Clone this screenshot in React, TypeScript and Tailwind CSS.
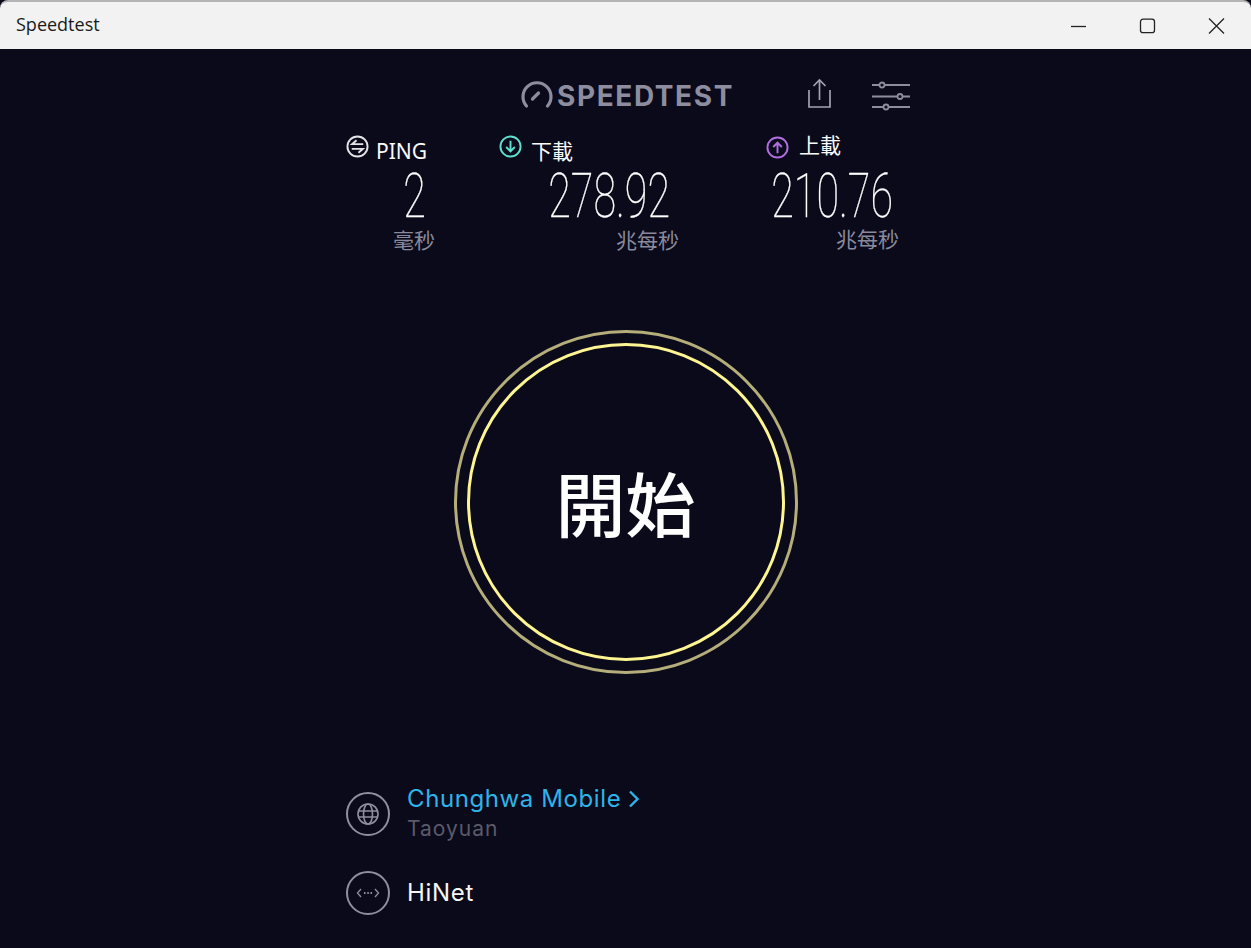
import React from "react";

const cjk = "font-['Noto_Sans','Noto_Sans_CJK_TC',sans-serif]";

function Metric({ icon, label, value, unit, cls, labelCls, valueCls, unitCls }: { icon: React.ReactNode; label: string; value: string; unit: string; cls: string; labelCls: string; valueCls: string; unitCls: string }) {
  return (
    <div className={`flex flex-col shrink-0 ${cls}`}>
      <div className="flex items-start h-[32px]">
        {icon}
        <span className={`text-[#fafafa] text-[21px] leading-[28px] font-normal ${cjk} ${labelCls}`}>{label}</span>
      </div>
      <div className={`h-[58px] flex justify-end ${valueCls}`}>
        <span className="text-white font-['Roboto',sans-serif] font-thin [-webkit-text-stroke:0.35px_white] text-[62px] leading-[58px] origin-right scale-x-[0.665] whitespace-nowrap inline-block">{value}</span>
      </div>
      <div className={`text-right text-[#8a8a9e] text-[21px] leading-[24px] ${cjk} ${unitCls}`}>{unit}</div>
    </div>
  );
}

export default function App() {
  return (
    <div className="w-[1251px] h-[948px] flex flex-col overflow-hidden bg-[#0a0a1a]">
      <header className="h-[49px] shrink-0 bg-[#f2f2f2] border-t-2 border-[#b4b4b4] rounded-t-[8px] flex items-center justify-between">
        <span className="pl-[16px] text-[18px] leading-[24px] -mt-[3px] text-[#1a1a1a] font-['Open_Sans',sans-serif]">Speedtest</span>
        <div className="flex items-center">
          <svg className="w-[69px] h-[16px]" viewBox="0 0 69 16" fill="none" stroke="#222" strokeWidth="1.3"><path d="M27 8.5h15" /></svg>
          <svg className="w-[69px] h-[16px]" viewBox="0 0 69 16" fill="none" stroke="#222" strokeWidth="1.3"><rect x="27.5" y="1.2" width="14" height="13.5" rx="2.5" /></svg>
          <svg className="w-[69px] h-[16px]" viewBox="0 0 69 16" fill="none" stroke="#222" strokeWidth="1.3"><path d="M27 .5l15 15M42 .5l-15 15" /></svg>
        </div>
      </header>

      <main className="flex-1 flex flex-col pl-[346px]">
        <div className="h-[80px] shrink-0 flex items-start pt-[29px] pl-[175px]">
          <svg className="w-[32px] h-[28px] shrink-0 mt-[3px]" viewBox="0 0 32 28" fill="none" stroke="#8d8d9f" strokeWidth="3.200" strokeLinecap="round">
            <path d="M5.5 25A14 14 0 1 1 26.5 25" />
            <path d="M11.500 18l6-6" />
          </svg>
          <span className="ml-[4px] mt-[1px] text-[#8d8d9f] font-['Inter',sans-serif] font-bold text-[28px] leading-[34px] tracking-[1.6px] whitespace-nowrap">SPEEDTEST</span>
          <svg className="w-[26px] h-[32px] shrink-0 ml-[73px]" viewBox="0 0 26 32" fill="none" stroke="#a2a2b2" strokeWidth="1.7"><path d="M2 12v17h21V12M12.500 22V2M6.500 8l6-6 6 6" /></svg>
          <svg className="w-[38px] h-[30px] shrink-0 ml-[39px] mt-[3px]" viewBox="0 0 38 30" fill="none" stroke="#8d8d9f" strokeWidth="1.800"><path d="M0 4h7M13 4h25M0 15.500h25M31 15.500h7M0 26h11M17 26h21" /><circle cx="10" cy="4" r="2.500" /><circle cx="28" cy="15.500" r="2.500" /><circle cx="14" cy="26" r="2.500" /></svg>
        </div>

        <div className="h-[130px] shrink-0 flex items-start">
          <Metric cls="w-[89px]" labelCls="mt-[8px]" valueCls="pr-[9px] mt-[6px]" unitCls="mt-[3px]"
            icon={<svg className="w-[23px] h-[23px] shrink-0 mr-[7px] mt-[6px]" viewBox="0 0 24 24" fill="none" stroke="#e4e4e8" strokeWidth="2"><circle cx="12" cy="12" r="10.500" /><path d="M18 9.500H6.500l4.500-4M6 14.500h11.500l-4.500 4" /></svg>}
            label="PING" value="2" unit="毫秒" />
          <Metric cls="w-[180px] ml-[64px]" labelCls="mt-[8px]" valueCls="pr-[9px] mt-[6px]" unitCls="mt-[3px]"
            icon={<svg className="w-[23px] h-[23px] shrink-0 mr-[9px] mt-[6px]" viewBox="0 0 24 24" fill="none" stroke="#5fe0cf" strokeWidth="2"><circle cx="12" cy="12" r="10.500" /><path d="M12 6v11M7.500 12.500 12 17l4.500-4.500" /></svg>}
            label="下載" value="278.92" unit="兆每秒" />
          <Metric cls="w-[133px] ml-[87px]" labelCls="mt-[2px]" valueCls="pr-[6px] mt-[6px]" unitCls="mt-[2px]"
            icon={<svg className="w-[23px] h-[23px] shrink-0 mr-[10px] mt-[7px]" viewBox="0 0 24 24" fill="none" stroke="#b06fe0" strokeWidth="2"><circle cx="12" cy="12" r="10.500" /><path d="M12 18V7M7.500 11.500 12 7l4.500 4.500" /></svg>}
            label="上載" value="210.76" unit="兆每秒" />
        </div>

        <div className="h-[344px] shrink-0 mt-[71px] -ml-[346px] flex justify-center">
          <div className="w-[344px] h-[344px] rounded-full border-[3px] border-[#b5ae7a] flex items-center justify-center">
            <div className="w-[318px] h-[318px] rounded-full border-[3px] border-[#fdf492] flex items-center justify-center">
              <span className="text-white text-[70px] leading-none font-medium font-['Noto_Sans_CJK_TC',sans-serif]">開始</span>
            </div>
          </div>
        </div>

        <div className="mt-[118px] flex items-center h-[44px]">
          <div className="w-[44px] h-[44px] rounded-full border-[2.5px] border-[#8f8f9f] flex items-center justify-center shrink-0">
            <svg className="w-[22px] h-[22px]" viewBox="0 0 22 22" fill="none" stroke="#8f8f9f" strokeWidth="1.6"><circle cx="11" cy="11" r="10" /><ellipse cx="11" cy="11" rx="4.500" ry="10" /><path d="M1 8h20M1 14h20" /></svg>
          </div>
          <div className="ml-[17px] flex flex-col -mt-[3px]">
            <div className="flex items-center h-[30px]">
              <span className="text-[#2fb4ea] font-['Inter',sans-serif] text-[24px] leading-[30px] tracking-[0.6px] whitespace-nowrap">Chunghwa Mobile</span>
              <svg className="w-[12px] h-[18px] ml-[7px]" viewBox="0 0 12 18" fill="none" stroke="#2fb4ea" strokeWidth="2.400"><path d="M2 1.500 9.500 9 2 16.500" /></svg>
            </div>
            <span className="text-[#5a5a6a] font-['Inter',sans-serif] text-[21px] leading-[26px] tracking-[1px] mt-[2px]">Taoyuan</span>
          </div>
        </div>
        <div className="mt-[35px] flex items-center h-[44px]">
          <div className="w-[44px] h-[44px] rounded-full border-[2.5px] border-[#8f8f9f] flex items-center justify-center shrink-0">
            <svg className="w-[24px] h-[12px]" viewBox="0 0 24 12" fill="none" stroke="#8f8f9f" strokeWidth="1.300"><path d="M5 2 1.500 6 5 10M19 2l3.500 4L19 10" /><path d="M8 6h1.500M11.300 6h1.500M14.500 6H16" strokeWidth="1.800" /></svg>
          </div>
          <span className="ml-[17px] text-[#f5f5f5] font-['Inter',sans-serif] text-[24px] leading-[30px] tracking-[0.7px]">HiNet</span>
        </div>
      </main>
    </div>
  );
}
